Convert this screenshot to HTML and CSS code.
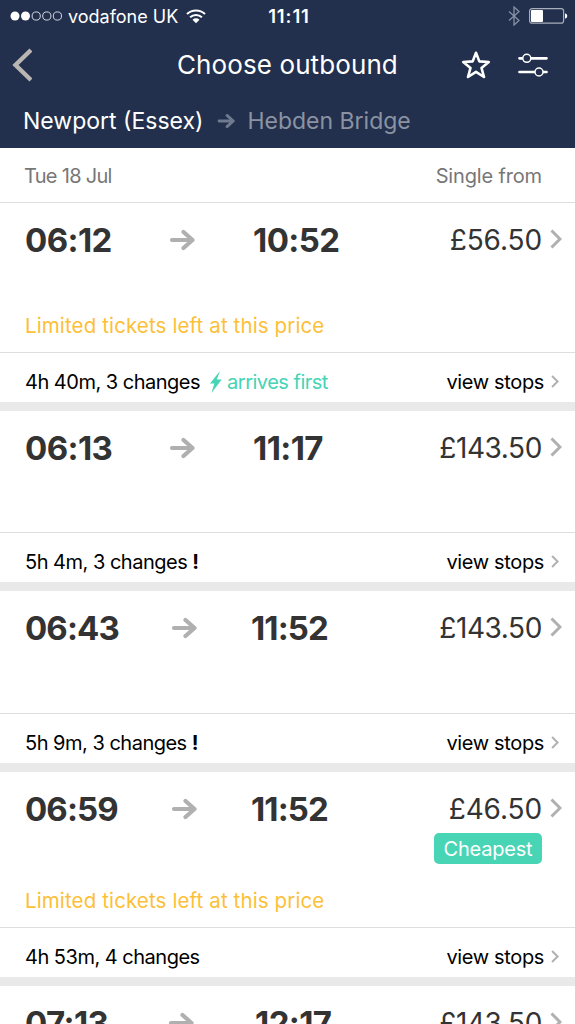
FILE: index.html
```
<!DOCTYPE html>
<html lang="en">
  <head>
    <meta charset="utf-8">
    <title>Choose outbound</title>
    <link rel="stylesheet" href="styles.css">
  </head>
  <body>
    <svg class="sprite" width="0" height="0">
        <symbol id="arrow" viewBox="0 0 26 22">
            <path d="M3 11H23.5M14.5 3L23.5 11L14.5 19" fill="none" stroke="currentColor" stroke-width="4.2" stroke-linecap="round" stroke-linejoin="round"/>
        </symbol>
        <symbol id="chevron" viewBox="0 0 12 20">
            <path d="M1.5 1.5L10 10L1.5 18.5" fill="none" stroke="currentColor" stroke-width="3"/>
        </symbol>
    </svg>
    <header>
        <div class="status">
            <div class="carrier">
                <svg width="53" height="12" viewBox="0 0 53 12">
                    <g fill="#fff"><circle cx="5" cy="6" r="4.5"/><circle cx="15.5" cy="6" r="4.5"/></g>
                    <g fill="none" stroke="#e8ebf0" stroke-width="0.9"><circle cx="26.2" cy="6" r="4.1"/><circle cx="36.8" cy="6" r="4.1"/><circle cx="47.4" cy="6" r="4.1"/></g>
                </svg>
                <span class="network">vodafone UK</span>
                <svg width="20" height="15" viewBox="0 0 20 15">
                    <path d="M1 5.1A13 13 0 0 1 19 5.1M4.1 8.3A8.6 8.6 0 0 1 15.9 8.3" fill="none" stroke="#fff" stroke-width="2.1"/>
                    <path d="M6.5 10.7A5 5 0 0 1 13.5 10.7L10 14.2Z" fill="#fff"/>
                </svg>
            </div>
            <span class="clock">11:11</span>
            <div class="power">
                <svg width="14" height="20" viewBox="0 0 14 20">
                    <path d="M2 5.5L12 14.5L7 19V1L12 5.5L2 14.5" fill="none" stroke="#8791a5" stroke-width="1.3"/>
                </svg>
                <svg width="39" height="16" viewBox="0 0 39 16">
                    <rect x="0.6" y="0.6" width="34" height="14.6" rx="2.5" fill="none" stroke="#a7aebc" stroke-width="1.2"/>
                    <rect x="2" y="2" width="12" height="12" rx="1" fill="#fff"/>
                    <path d="M36 5.3Q38.3 6 38.3 8T36 10.7Z" fill="#fff"/>
                </svg>
            </div>
        </div>
        <div class="bar">
            <svg class="back" width="20" height="34" viewBox="0 0 20 34">
                <path d="M19 2L3.5 17L19 32" fill="none" stroke="#b9b5b3" stroke-width="4.4"/>
            </svg>
            <h1>Choose outbound</h1>
            <svg class="star" width="30" height="30" viewBox="0 0 30 30">
                <path d="M15 2.8L18.3 11.4L27.8 12L20.5 17.9L23 27L15 21.9L7 27L9.5 17.9L2.2 12L11.7 11.4Z" fill="none" stroke="#fff" stroke-width="2.6" stroke-linejoin="round"/>
            </svg>
            <svg class="filter" width="30" height="26" viewBox="0 0 30 26">
                <path d="M1.5 6.3H28.5M1.5 20H28.5" stroke="#fff" stroke-width="2.7" stroke-linecap="round"/>
                <circle cx="8.8" cy="6.3" r="4" fill="#22304d" stroke="#fff" stroke-width="1.5"/>
                <circle cx="21" cy="20" r="4" fill="#22304d" stroke="#fff" stroke-width="1.5"/>
            </svg>
        </div>
        <div class="route">
            <span class="from">Newport (Essex)</span>
            <svg width="18" height="16"><use href="#arrow"/></svg>
            <span class="to">Hebden Bridge</span>
        </div>
    </header>
    <div class="subheader">
        <span class="date">Tue 18 Jul</span>
        <span class="single">Single from</span>
    </div>
    <main>
        <article class="first">
            <div class="journey">
                <div class="times">
                    <span class="dep">06:12</span>
                    <svg width="26" height="22"><use href="#arrow"/></svg>
                    <span class="arr">10:52</span>
                </div>
                <div class="price"><span class="short">£56.50</span><svg width="12" height="20"><use href="#chevron"/></svg></div>
                <p class="limited">Limited tickets left at this price</p>
            </div>
            <div class="details">
                <span class="duration">4h 40m, 3 changes</span>
                <svg class="bolt" width="13" height="24" viewBox="0 0 13 24">
                    <path d="M11 1L1 13.5H5.3L2.5 23L12.7 9.6H7.8Z" fill="#45d4b4"/>
                </svg>
                <span class="fastest">arrives first</span>
                <span class="stops">view stops</span>
                <svg width="8" height="13"><use href="#chevron"/></svg>
            </div>
        </article>
        <article>
            <div class="journey">
                <div class="times">
                    <span class="dep">06:13</span>
                    <svg width="26" height="22"><use href="#arrow"/></svg>
                    <span class="arr">11:17</span>
                </div>
                <div class="price"><span>£143.50</span><svg width="12" height="20"><use href="#chevron"/></svg></div>
            </div>
            <div class="details">
                <span class="duration">5h 4m, 3 changes <b>!</b></span>
                <span class="stops">view stops</span>
                <svg width="8" height="13"><use href="#chevron"/></svg>
            </div>
        </article>
        <article class="third">
            <div class="journey">
                <div class="times wide">
                    <span class="dep">06:43</span>
                    <svg width="26" height="22"><use href="#arrow"/></svg>
                    <span class="arr">11:52</span>
                </div>
                <div class="price"><span>£143.50</span><svg width="12" height="20"><use href="#chevron"/></svg></div>
            </div>
            <div class="details">
                <span class="duration">5h 9m, 3 changes <b>!</b></span>
                <span class="stops">view stops</span>
                <svg width="8" height="13"><use href="#chevron"/></svg>
            </div>
        </article>
        <article class="cheap">
            <div class="journey">
                <div class="times wide">
                    <span class="dep">06:59</span>
                    <svg width="26" height="22"><use href="#arrow"/></svg>
                    <span class="arr">11:52</span>
                </div>
                <div class="price"><span class="short">£46.50</span><svg width="12" height="20"><use href="#chevron"/></svg></div>
                <span class="badge">Cheapest</span>
                <p class="limited">Limited tickets left at this price</p>
            </div>
            <div class="details">
                <span class="duration">4h 53m, 4 changes</span>
                <span class="stops">view stops</span>
                <svg width="8" height="13"><use href="#chevron"/></svg>
            </div>
        </article>
        <article class="last">
            <div class="journey">
                <div class="times">
                    <span class="dep">07:13</span>
                    <svg width="26" height="22"><use href="#arrow"/></svg>
                    <span class="arr">12:17</span>
                </div>
                <div class="price"><span>£143.50</span><svg width="12" height="20"><use href="#chevron"/></svg></div>
            </div>
        </article>
    </main>
  </body>
</html>
```
FILE: styles.css
```
* {
    box-sizing: border-box;
}
body {
    margin: 0;
    height: 1024px;
    overflow: hidden;
    background: #fff;
    font-family: Inter, "Liberation Sans", sans-serif;
    white-space: nowrap;
}
svg {
    display: block;
    flex: none;
}
.sprite {
    display: none;
}
header {
    height: 148px;
    background: #22304d;
    color: #fff;
}
.status {
    display: grid;
    grid-template-columns: 1fr auto 1fr;
    align-items: center;
    height: 32px;
    padding: 0 7px 0 10px;
}
.carrier, .power {
    display: flex;
    align-items: center;
}
.network {
    margin: 0 8px 0 5px;
    font-size: 18px;
}
.clock {
    font-size: 18.5px;
    font-weight: 600;
    letter-spacing: 0.9px;
}
.power {
    justify-content: flex-end;
    gap: 7px;
}
.power svg:first-child {
    margin-right: 1px;
}
.bar {
    display: grid;
    grid-template-columns: 165px 284px 57px 1fr;
    align-items: center;
    height: 65px;
    padding-left: 12px;
}
h1 {
    margin: 0;
    font-size: 26px;
    font-weight: 400;
    letter-spacing: 0.1px;
}
.route {
    display: flex;
    align-items: center;
    height: 47px;
    padding-left: 23px;
    font-size: 23px;
}
.route svg {
    margin: 0 12px 0 14px;
    color: #6f7a8e;
}
.to {
    color: #8b93a3;
}
.subheader {
    display: flex;
    justify-content: space-between;
    height: 55px;
    padding: 0 33px 0 24px;
    border-bottom: 1px solid #dedede;
    line-height: 57px;
    font-size: 20px;
    color: #777;
}
.date {
    letter-spacing: -0.7px;
}
.single {
    letter-spacing: -0.15px;
}
article {
    border-bottom: 9px solid #e9e9e9;
}
.journey {
    display: grid;
    grid-template-columns: 1fr auto;
    grid-template-rows: 74px 1fr;
    height: 122px;
    padding: 0 13px 0 25px;
    border-bottom: 1px solid #dedede;
}
.first .journey {
    height: 150px;
}
.third .journey {
    height: 123px;
}
.cheap .journey {
    grid-template-rows: 61px 31px 1fr;
    height: 156px;
}
.times {
    display: grid;
    grid-template-columns: 144px 84px auto;
    align-items: center;
    justify-content: start;
    height: 74px;
    font-size: 33px;
    font-weight: 700;
    letter-spacing: -0.6px;
    color: #333;
}
.times.wide {
    grid-template-columns: 146px 80px auto;
    letter-spacing: -0.9px;
}
.last .times {
    grid-template-columns: 143px 87px auto;
}
.cheap .times, .cheap .price {
    height: 73px;
}
.times svg, .price svg, .details svg {
    color: #b0b0b0;
}
.price {
    display: flex;
    align-items: center;
    justify-content: flex-end;
    gap: 8px;
    height: 74px;
    font-size: 28px;
    letter-spacing: -0.4px;
    color: #333;
}
.short {
    letter-spacing: -0.1px;
}
.price svg {
    margin-bottom: 2px;
}
.limited {
    grid-column: 1 / 3;
    align-self: end;
    margin: 0 0 14px;
    line-height: 24px;
    font-size: 20.5px;
    letter-spacing: 0.12px;
    color: #fdbf38;
}
.badge {
    grid-column: 2;
    justify-self: end;
    width: 108px;
    height: 31px;
    margin-right: 20px;
    border-radius: 5px;
    background: #48d5b5;
    line-height: 32px;
    font-size: 20px;
    letter-spacing: -0.2px;
    text-align: center;
    color: #fff;
}
.details {
    display: flex;
    align-items: center;
    height: 49px;
    padding: 9px 16px 0 25px;
    font-size: 20px;
    letter-spacing: -0.5px;
    color: #000;
}
.details svg {
    margin-bottom: 1px;
}
.details .bolt {
    margin: 0 5px 1px 9px;
}
.fastest {
    color: #45d4b4;
}
.stops {
    margin: 0 7px 0 auto;
    letter-spacing: -0.35px;
}
```
